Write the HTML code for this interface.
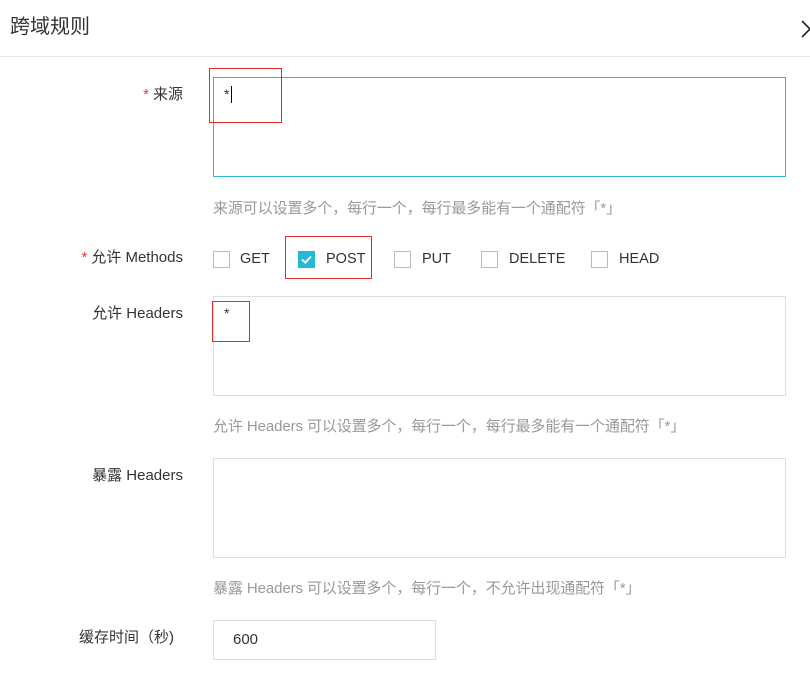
<!DOCTYPE html>
<html><head><meta charset="utf-8"><style>
*{margin:0;padding:0;box-sizing:border-box}
body{width:810px;height:682px;background:#fff;position:relative;overflow:hidden;font-family:"Liberation Sans","Noto Sans CJK SC",sans-serif;color:#333;font-size:14px}
.a{position:absolute;white-space:nowrap}
.lbl{position:absolute;right:627px;white-space:nowrap;font-size:15px;color:#333;line-height:20px}
.req{color:#e4393c;margin-right:4px}
.ta{position:absolute;left:213px;width:573px;border:1px solid #ddd;background:#fff}
.help{position:absolute;left:213px;color:#999;font-size:15px;line-height:20px;white-space:nowrap;letter-spacing:-0.1px}
.cb{position:absolute;width:17px;height:17px;border:1px solid #bbb;top:251px;background:#fff}
.ct{position:absolute;top:249px;font-size:14.5px;line-height:20px;color:#333}
.red{position:absolute;border:1px solid #e52a2a}
</style></head><body>
<div class="a" style="left:10px;top:14px;font-size:20px;line-height:26px;color:#333">跨域规则</div>
<svg class="a" style="left:801px;top:20px" width="10" height="18" viewBox="0 0 10 18"><path d="M1 1 L9 9 L1 17" fill="none" stroke="#222" stroke-width="1.6"/></svg>
<div class="a" style="left:0;top:56px;width:810px;height:1px;background:#e5e5e5"></div>

<div class="lbl" style="top:85px"><span class="req">*</span>来源</div>
<div class="ta" style="top:77px;height:100px;border-color:#2bb4d6"></div>
<div class="a" style="left:224px;top:84px;font-size:14px;line-height:20px">*</div>
<div class="a" style="left:231px;top:86px;width:1px;height:17px;background:#000"></div>
<div class="red" style="left:209px;top:68px;width:73px;height:55px"></div>
<div class="help" style="top:199px">来源可以设置多个，每行一个，每行最多能有一个通配符「*」</div>

<div class="lbl" style="top:248px"><span class="req">*</span>允许 Methods</div>
<div class="cb" style="left:213px"></div><div class="ct" style="left:240px">GET</div>
<div class="cb" style="left:298px;background:#22b8d8;border-color:#22b8d8"><svg width="15" height="15" viewBox="0 0 15 15" style="position:absolute;left:0;top:0"><path d="M3 7.5 L6.3 10.6 L12 4.5" fill="none" stroke="#fff" stroke-width="2"/></svg></div><div class="ct" style="left:326px">POST</div>
<div class="red" style="left:285px;top:236px;width:87px;height:43px"></div>
<div class="cb" style="left:394px"></div><div class="ct" style="left:422px">PUT</div>
<div class="cb" style="left:481px"></div><div class="ct" style="left:509px">DELETE</div>
<div class="cb" style="left:591px"></div><div class="ct" style="left:619px">HEAD</div>

<div class="lbl" style="top:304px">允许 Headers</div>
<div class="ta" style="top:296px;height:100px"></div>
<div class="a" style="left:224px;top:303px;font-size:14px;line-height:20px">*</div>
<div class="red" style="left:212px;top:301px;width:38px;height:41px"></div>
<div class="help" style="top:417px">允许 Headers 可以设置多个，每行一个，每行最多能有一个通配符「*」</div>

<div class="lbl" style="top:466px">暴露 Headers</div>
<div class="ta" style="top:458px;height:100px"></div>
<div class="help" style="top:579px">暴露 Headers 可以设置多个，每行一个，不允许出现通配符「*」</div>

<div class="a" style="left:79px;top:628px;font-size:15px;line-height:20px">缓存时间（秒)</div>
<div class="ta" style="top:620px;height:40px;width:223px"></div>
<div class="a" style="left:233px;top:630px;font-size:15px;line-height:20px">600</div>
</body></html>
